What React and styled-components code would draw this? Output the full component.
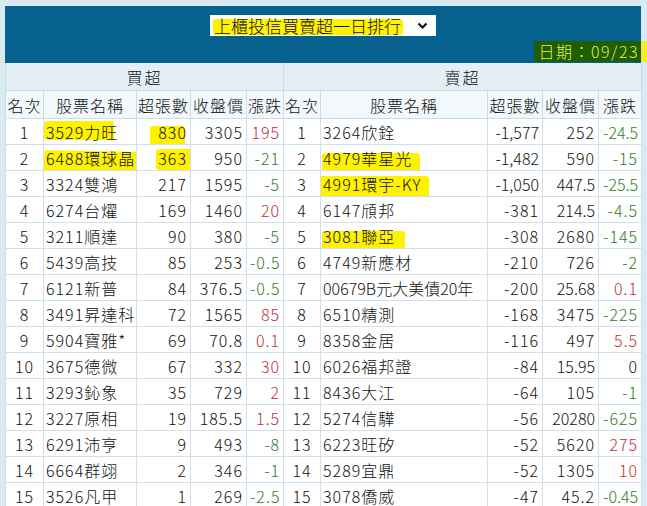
import React from "react";
import styled, { createGlobalStyle } from "styled-components";

const Global = createGlobalStyle`
  html, body { margin: 0; padding: 0; background: #d9eaf2; }
  body { font-family: "Noto Sans CJK TC", "Noto Sans", sans-serif; font-weight: 300; color: #111; }
`;

const Frame = styled.div`
  width: 636px;
  padding: 6px 6px 0 5px;
  overflow: hidden;
`;

const Header = styled.div`
  height: 57px;
  background: #06618e;
  display: flex;
  flex-direction: column;
  align-items: center;
  padding-top: 9px;
  box-sizing: border-box;
`;

const Select = styled.div`
  width: 226px;
  height: 21px;
  background: #fff;
  display: flex;
  align-items: center;
  justify-content: space-between;
  box-sizing: border-box;
  padding: 0 8px 0 4px;
  font-size: 17px;
  line-height: 21px;
  letter-spacing: 0px;
  color: #111;
`;

const DateRow = styled.div`
  align-self: stretch;
  display: flex;
  justify-content: flex-end;
  margin-top: 5px;
`;

const DateText = styled.span`
  font-size: 16px;
  line-height: 21px;
  letter-spacing: 1.5px;
  color: #e4f03c;
  padding: 0 8px 0 4px;
  margin-right: -6px;
  background: linear-gradient(to right, #1f5e05 0, #1f5e05 calc(100% - 6px), #f3ee2a calc(100% - 6px));
`;

const Table = styled.table`
  border-collapse: collapse;
  table-layout: fixed;
  width: 636px;
  background: #fff;
  font-size: 16px;
  letter-spacing: 1px;
`;

const Col = styled.col``;

const GroupCell = styled.th`
  height: 27px;
  padding: 0;
  font-weight: 300;
  background: #e3eff5;
  border: 1px solid #c8dce7;
  border-top: none;
  text-align: center;
  letter-spacing: 2px;
`;

const HeadCell = styled.th`
  height: 27px;
  padding: 0;
  font-weight: 300;
  background: #f2f8fb;
  border: 1px solid #c8dce7;
  text-align: center;
  white-space: nowrap;
  letter-spacing: 1px;
`;

const Cell = styled.td`
  height: 25px;
  padding: 0 ${(p) => (p.$align === "right" ? "3px" : "2px")};
  border: 1px solid #cfe0ea;
  text-align: ${(p) => p.$align || "left"};
  white-space: nowrap;
  overflow: hidden;
  color: ${(p) => (p.$tone === "up" ? "#b8323a" : p.$tone === "down" ? "#2f7a2a" : "#111")};
  letter-spacing: ${(p) => (p.$tight ? "0px" : "1px")};
`;

const Mark = styled.span`
  position: relative;
  z-index: 0;
  &::before {
    content: "";
    position: absolute;
    z-index: -1;
    left: ${(p) => p.$l}px;
    right: ${(p) => p.$r}px;
    top: ${(p) => p.$t}px;
    bottom: ${(p) => p.$b}px;
    background: #fff200;
    border-radius: 3px;
    transform: rotate(${(p) => p.$rot || 0}deg);
  }
`;

const Chevron = () => (
  <svg width="11" height="8" viewBox="0 0 11 8">
    <path d="M1.5 1.5 L5.5 5.5 L9.5 1.5" fill="none" stroke="#111" strokeWidth="2.2" />
  </svg>
);

const buy = [
  [1, "3529力旺", "830", "3305", "195", { name: [-2, 4, 1, 4], vol: [-8, 2, 6, -3] }],
  [2, "6488環球晶", "363", "950", "-21", { name: [-2, -6, 5, -3, 1], vol: [-2, -12, 3, 0] }],
  [3, "3324雙鴻", "217", "1595", "-5"],
  [4, "6274台燿", "169", "1460", "20"],
  [5, "3211順達", "90", "380", "-5"],
  [6, "5439高技", "85", "253", "-0.5"],
  [7, "6121新普", "84", "376.5", "-0.5"],
  [8, "3491昇達科", "72", "1565", "85"],
  [9, "5904寶雅*", "69", "70.8", "0.1"],
  [10, "3675德微", "67", "332", "30"],
  [11, "3293鈊象", "35", "729", "2"],
  [12, "3227原相", "19", "185.5", "1.5"],
  [13, "6291沛亨", "9", "493", "-8"],
  [14, "6664群翊", "2", "346", "-1"],
  [15, "3526凡甲", "1", "269", "-2.5"],
];

const sell = [
  [1, "3264欣銓", "-1,577", "252", "-24.5"],
  [2, "4979華星光", "-1,482", "590", "-15", { name: [-1, -8, 7, -2] }],
  [3, "4991環宇-KY", "-1,050", "447.5", "-25.5", { name: [-7, -8, 4, -2] }],
  [4, "6147頎邦", "-381", "214.5", "-4.5"],
  [5, "3081聯亞", "-308", "2680", "-145", { name: [-1, -10, 7, -3] }],
  [6, "4749新應材", "-210", "726", "-2"],
  [7, "00679B元大美債20年", "-200", "25.68", "0.1"],
  [8, "6510精測", "-168", "3475", "-225"],
  [9, "8358金居", "-116", "497", "5.5"],
  [10, "6026福邦證", "-84", "15.95", "0"],
  [11, "8436大江", "-64", "105", "-1"],
  [12, "5274信驊", "-56", "20280", "-625"],
  [13, "6223旺矽", "-52", "5620", "275"],
  [14, "5289宜鼎", "-52", "1305", "10"],
  [15, "3078僑威", "-47", "45.2", "-0.45"],
];

const tone = (v) => {
  const n = parseFloat(v);
  if (n > 0) return "up";
  if (n < 0) return "down";
  return undefined;
};

const withMark = (text, m) =>
  m ? (
    <Mark $l={m[0]} $r={m[1]} $t={m[2]} $b={m[3]} $rot={m[4]}>
      {text}
    </Mark>
  ) : (
    text
  );

const headers = ["名次", "股票名稱", "超張數", "收盤價", "漲跌"];

export default function App() {
  return (
    <>
      <Global />
      <Frame>
        <Header>
          <Select>
            <Mark $l={-1} $r={-2} $t={4} $b={1}>上櫃投信買賣超一日排行</Mark>
            <Chevron />
          </Select>
          <DateRow>
            <DateText>日期：09/23</DateText>
          </DateRow>
        </Header>
        <Table>
          <colgroup>
            <Col style={{ width: 38 }} />
            <Col style={{ width: 93 }} />
            <Col style={{ width: 54 }} />
            <Col style={{ width: 56 }} />
            <Col style={{ width: 37 }} />
            <Col style={{ width: 37 }} />
            <Col style={{ width: 167 }} />
            <Col style={{ width: 55 }} />
            <Col style={{ width: 56 }} />
            <Col style={{ width: 43 }} />
          </colgroup>
          <thead>
            <tr>
              <GroupCell colSpan={5}>買超</GroupCell>
              <GroupCell colSpan={5}>賣超</GroupCell>
            </tr>
            <tr>
              {headers.concat(headers).map((h, i) => (
                <HeadCell key={i}>{h}</HeadCell>
              ))}
            </tr>
          </thead>
          <tbody>
            {buy.map((b, i) => {
              const s = sell[i];
              const bm = b[5] || {};
              const sm = s[5] || {};
              return (
                <tr key={i}>
                  <Cell $align="center">{b[0]}</Cell>
                  <Cell>{withMark(b[1], bm.name)}</Cell>
                  <Cell $align="right">{withMark(b[2], bm.vol)}</Cell>
                  <Cell $align="right">{b[3]}</Cell>
                  <Cell $align="right" $tone={tone(b[4])}>{b[4]}</Cell>
                  <Cell $align="center">{s[0]}</Cell>
                  <Cell $tight={s[1].length > 10}>{withMark(s[1], sm.name)}</Cell>
                  <Cell $align="right" $tight={s[2].length > 5}>{s[2]}</Cell>
                  <Cell $align="right" $tight={s[3].length > 4}>{s[3]}</Cell>
                  <Cell $align="right" $tone={tone(s[4])} $tight={s[4].length > 4}>{s[4]}</Cell>
                </tr>
              );
            })}
          </tbody>
        </Table>
      </Frame>
    </>
  );
}
